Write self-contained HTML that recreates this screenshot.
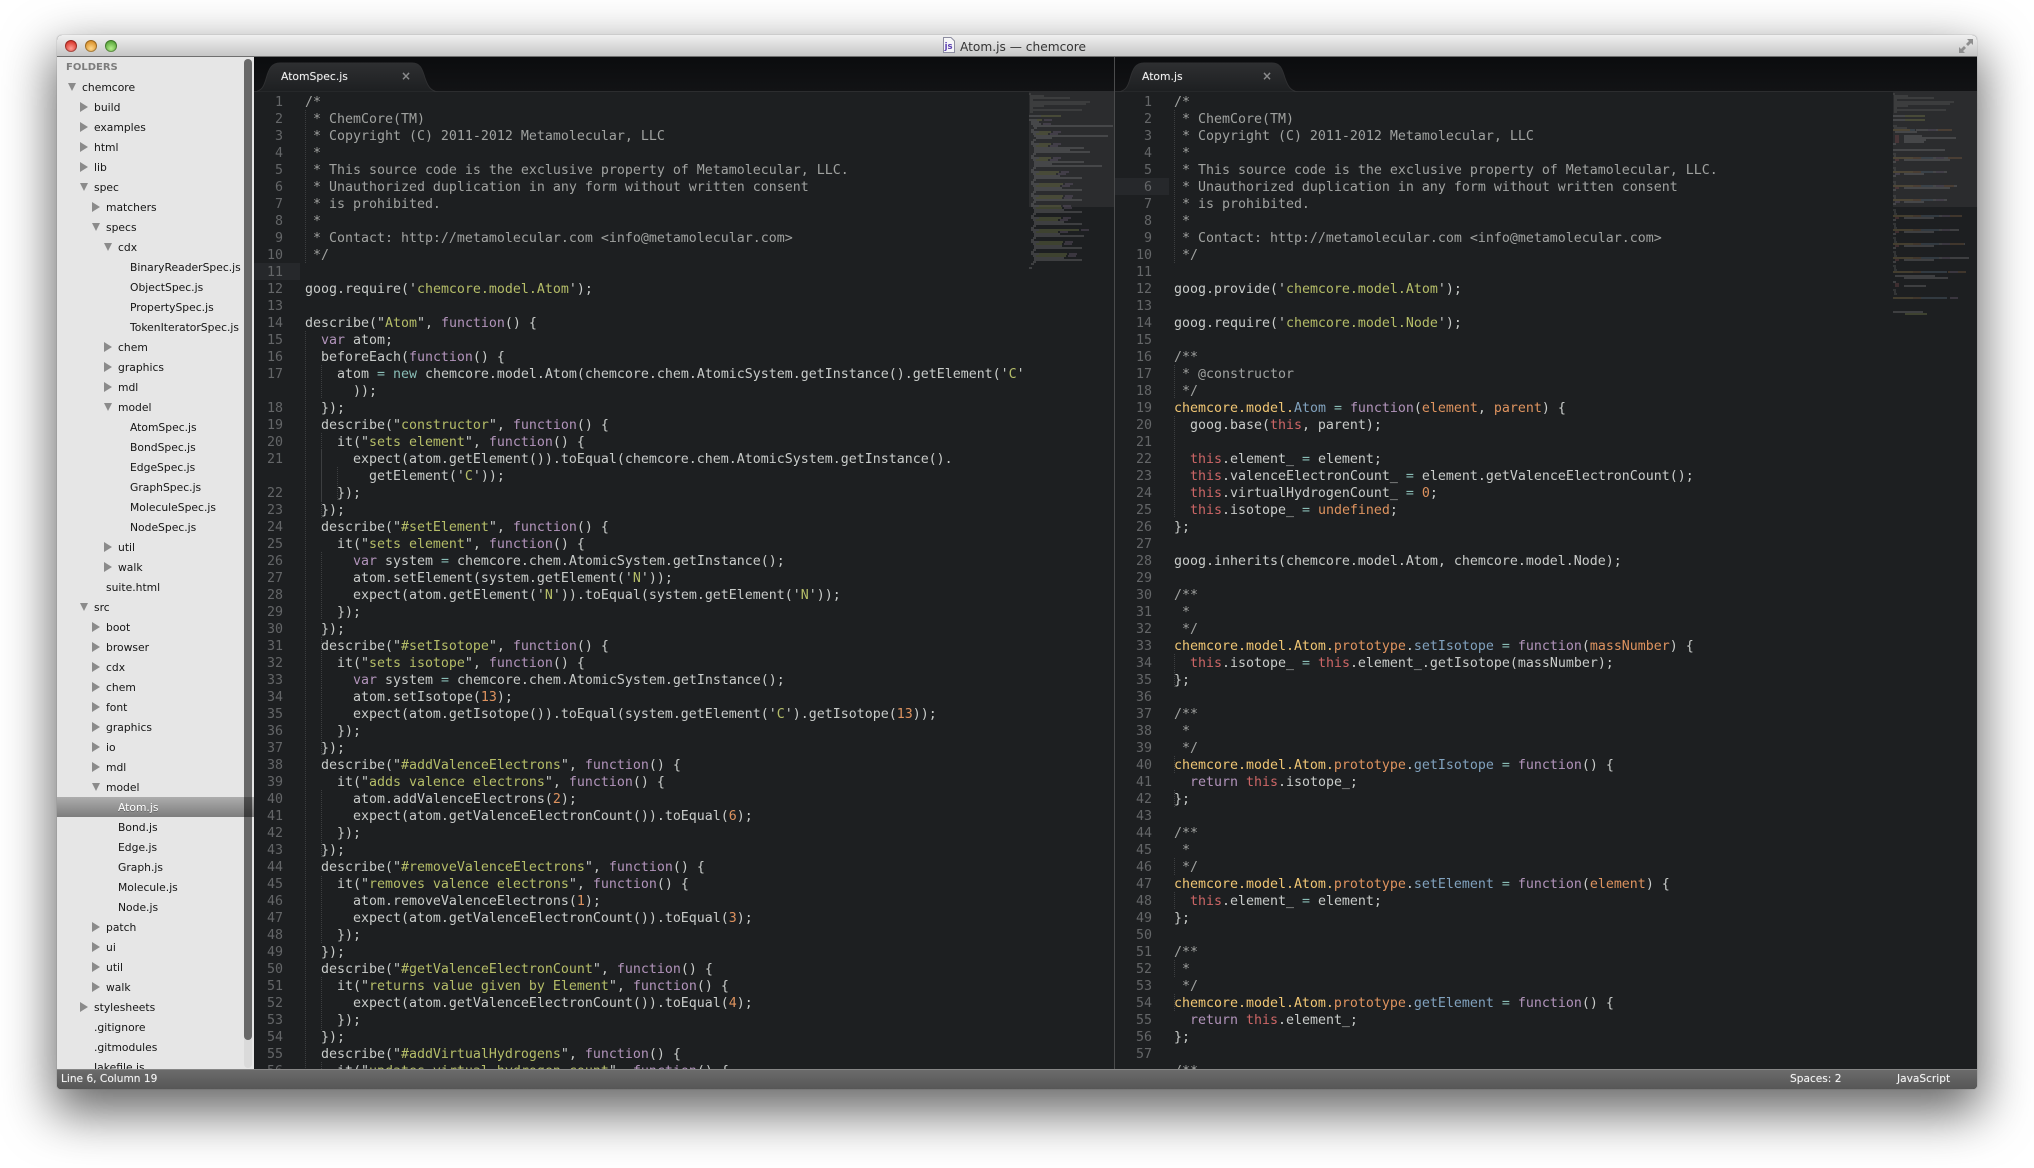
<!DOCTYPE html>
<html><head><meta charset="utf-8"><title>Atom.js — chemcore</title>
<style>
html,body{margin:0;padding:0;width:2034px;height:1168px;overflow:hidden;background:#fff}
div,pre,svg{position:absolute;margin:0}
#win{left:57px;top:35px;width:1920px;height:1054px;border-radius:5px 5px 4px 4px;background:#1d1f21;box-shadow:0 20px 50px 4px rgba(0,0,0,.6),0 0 0 1px rgba(0,0,0,.06)}
#title{left:57px;top:35px;width:1920px;height:22px;border-radius:5px 5px 0 0;background:linear-gradient(#f0f0f0,#c6c6c6);border-bottom:1px solid #6f6f6f;box-sizing:border-box}
.tl{width:12px;height:12px;border-radius:50%;top:40px;box-shadow:inset 0 0 0 1px rgba(0,0,0,.3)}
#ttext{left:960px;top:38px;font:12.2px/18px "DejaVu Sans",sans-serif;color:#343434;white-space:pre}
#tabs{left:254px;top:57px;width:1723px;height:35px;background:linear-gradient(#0b0c0e,#121315);border-bottom:1px solid #2c2d2f;box-sizing:border-box}
#side{left:57px;top:57px;width:197px;height:1012px;box-sizing:border-box;padding-top:1px;background:#e6e6e6;overflow:hidden;font:10.75px/20px "DejaVu Sans",sans-serif;color:#141414;filter:blur(.25px)}
#side p{margin:0;height:20px;white-space:pre;position:relative}
#side .f{padding-left:9px;font-weight:bold;color:#7d7d7d;font-size:10px}
.a{padding-left:25px}.b{padding-left:37px}.c{padding-left:49px}.d{padding-left:61px}.e{padding-left:73px}
.r:before,.o:before{content:"";position:absolute;top:4px;width:0;height:0}
.r:before{border-left:8px solid #8b8b8b;border-top:5px solid transparent;border-bottom:5px solid transparent}
.o:before{top:5px;border-top:8px solid #8b8b8b;border-left:4.5px solid transparent;border-right:4.5px solid transparent}
.a:before{left:11px}.b:before{left:23px}.c:before{left:35px}.d:before{left:47px}
#sel{left:57px;top:797px;width:197px;height:20px;background:linear-gradient(#adadad,#7d7d7d);color:#fff;font:10.75px/20px "DejaVu Sans",sans-serif;white-space:pre;box-sizing:border-box;padding:1px 0 0 61px;text-shadow:0 1px 0 #666;filter:blur(.25px);overflow:hidden}
.ed{overflow:hidden;top:92px;height:977px;background:#1d1f21}
pre{font:13.29px/17px "DejaVu Sans Mono",monospace;color:#c9ccca;top:2px;filter:blur(.25px)}
.n{color:#646668;text-align:right}
.cm{color:#a0a2a0}
s,u,b,em,i,a,tt{text-decoration:none;font:inherit}
s{color:#b5bd68}u{color:#b294bb}b{color:#cc6666}em{color:#de935f}i{color:#81a2be}a{color:#f0c674}tt{color:#8abeb7}
#status{left:57px;top:1069px;width:1920px;height:20px;border-radius:0 0 4px 4px;background:linear-gradient(#6b6b6b,#565656);border-top:1px solid #868686;box-sizing:border-box;color:#f6f6f6;font:10.6px/19px "DejaVu Sans",sans-serif;white-space:pre;text-shadow:0 0 1px rgba(255,255,255,.35)}
#status span{position:absolute;top:0}
.tn{color:#f2f2f2;font:10.8px/18px "DejaVu Sans",sans-serif;top:68px;white-space:pre;text-shadow:0 0 1px rgba(255,255,255,.3)}
.tx{color:#8a8b8c;font:bold 12px/18px "DejaVu Sans",sans-serif;top:67px}
.mm{opacity:.72}
</style></head><body>
<div id="win"></div>
<div id="title"></div>
<div class="tl" style="left:65px;background:radial-gradient(circle at 50% 70%,#ff9d94,#d8352b 70%)"></div>
<div class="tl" style="left:85px;background:radial-gradient(circle at 50% 70%,#ffd78a,#d9902a 70%)"></div>
<div class="tl" style="left:105px;background:radial-gradient(circle at 50% 70%,#b4ee8c,#58a63a 70%)"></div>
<svg style="left:942px;top:37px" width="14" height="16" viewBox="0 0 14 16"><path d="M1.5.5H9L12.5 4V15.5H1.5Z" fill="#f6f6f8" stroke="#8d8da0"/><text x="2.6" y="12" font-family="DejaVu Sans,sans-serif" font-weight="bold" font-size="8.5" fill="#5a3fb0">js</text></svg>
<div id="ttext">Atom.js — chemcore</div>
<svg style="left:1958px;top:38px" width="16" height="16" viewBox="0 0 16 16"><path d="M9 1H15V7L13 5L10 8L8 6L11 3ZM1 15V9L3 11L6 8L8 10L5 13L7 15Z" fill="#8e8e8e"/></svg>

<div id="tabs"></div>
<svg style="left:254px;top:57px" width="1723" height="36" viewBox="254 57 1723 36">
<defs><linearGradient id="g" x1="0" y1="0" x2="0" y2="1"><stop offset="0" stop-color="#2e2f31"/><stop offset="1" stop-color="#1d1f21"/></linearGradient></defs>
<path d="M254 92C262 91 264 86 266 79C269 68 272 63 280 63H412C420 63 422 68 425 78C428 87 431 91 438 92Z" fill="url(#g)" stroke="#2f3032" stroke-width="1"/>
<path d="M1118 92C1126 91 1128 86 1130 79C1133 68 1136 63 1144 63H1272C1280 63 1282 68 1285 78C1288 87 1291 91 1298 92Z" fill="url(#g)" stroke="#2f3032" stroke-width="1"/>
</svg>
<div class="tn" style="left:281px">AtomSpec.js</div>
<div class="tx" style="left:401px">×</div>
<div class="tn" style="left:1142px">Atom.js</div>
<div class="tx" style="left:1262px">×</div>

<div id="side"><p class="f">FOLDERS</p>
<p class="a o">chemcore</p>
<p class="b r">build</p>
<p class="b r">examples</p>
<p class="b r">html</p>
<p class="b r">lib</p>
<p class="b o">spec</p>
<p class="c r">matchers</p>
<p class="c o">specs</p>
<p class="d o">cdx</p>
<p class="e">BinaryReaderSpec.js</p>
<p class="e">ObjectSpec.js</p>
<p class="e">PropertySpec.js</p>
<p class="e">TokenIteratorSpec.js</p>
<p class="d r">chem</p>
<p class="d r">graphics</p>
<p class="d r">mdl</p>
<p class="d o">model</p>
<p class="e">AtomSpec.js</p>
<p class="e">BondSpec.js</p>
<p class="e">EdgeSpec.js</p>
<p class="e">GraphSpec.js</p>
<p class="e">MoleculeSpec.js</p>
<p class="e">NodeSpec.js</p>
<p class="d r">util</p>
<p class="d r">walk</p>
<p class="c">suite.html</p>
<p class="b o">src</p>
<p class="c r">boot</p>
<p class="c r">browser</p>
<p class="c r">cdx</p>
<p class="c r">chem</p>
<p class="c r">font</p>
<p class="c r">graphics</p>
<p class="c r">io</p>
<p class="c r">mdl</p>
<p class="c o">model</p>
<p class="d"></p>
<p class="d">Bond.js</p>
<p class="d">Edge.js</p>
<p class="d">Graph.js</p>
<p class="d">Molecule.js</p>
<p class="d">Node.js</p>
<p class="c r">patch</p>
<p class="c r">ui</p>
<p class="c r">util</p>
<p class="c r">walk</p>
<p class="b r">stylesheets</p>
<p class="b">.gitignore</p>
<p class="b">.gitmodules</p>
<p class="b">Jakefile.js</p>
</div>
<div id="sel">Atom.js</div>
<div style="left:244px;top:59px;width:8px;height:1009px;border-radius:4px;background:rgba(0,0,0,.05)"></div>
<div style="left:244px;top:59px;width:8px;height:981px;border-radius:4px;background:rgba(0,0,0,.52)"></div>

<div class="ed" style="left:254px;width:860px">
<div style="left:0;top:171px;width:46px;height:17px;background:#26282b"></div>
<pre class="n" style="left:0;width:29px">1
2
3
4
5
6
7
8
9
10
11
12
13
14
15
16
17

18
19
20
21

22
23
24
25
26
27
28
29
30
31
32
33
34
35
36
37
38
39
40
41
42
43
44
45
46
47
48
49
50
51
52
53
54
55
56</pre>
<svg style="left:0;top:0" width="860" height="977" viewBox="254 92 860 977"><g stroke="#3c3e40" stroke-dasharray="1 1" fill="none"><path d="M305.5 110V263M305.5 331V1069M321.5 365V399M321.5 433V518M321.5 637V688M321.5 790V858M321.5 876V943M321.5 977V1030M321.5 1062V1069M321.5 450V501M321.5 552V620M321.5 688V756M337.5 467V501"/></g></svg>
<pre style="left:51px"><span class="cm">/*
 * ChemCore(TM)
 * Copyright (C) 2011-2012 Metamolecular, LLC
 *
 * This source code is the exclusive property of Metamolecular, LLC.
 * Unauthorized duplication in any form without written consent
 * is prohibited.
 *
 * Contact: http://metamolecular.com &lt;info@metamolecular.com&gt;
 */</span>

goog.require('<s>chemcore.model.Atom</s>');

describe("<s>Atom</s>", <u>function</u>() {
  <u>var</u> atom;
  beforeEach(<u>function</u>() {
    atom <tt>=</tt> <tt>new</tt> chemcore.model.Atom(chemcore.chem.AtomicSystem.getInstance().getElement('<s>C</s>'
      ));
  });
  describe("<s>constructor</s>", <u>function</u>() {
    it("<s>sets element</s>", <u>function</u>() {
      expect(atom.getElement()).toEqual(chemcore.chem.AtomicSystem.getInstance().
        getElement('<s>C</s>'));
    });
  });
  describe("<s>#setElement</s>", <u>function</u>() {
    it("<s>sets element</s>", <u>function</u>() {
      <u>var</u> system <tt>=</tt> chemcore.chem.AtomicSystem.getInstance();
      atom.setElement(system.getElement('<s>N</s>'));
      expect(atom.getElement('<s>N</s>')).toEqual(system.getElement('<s>N</s>'));
    });
  });
  describe("<s>#setIsotope</s>", <u>function</u>() {
    it("<s>sets isotope</s>", <u>function</u>() {
      <u>var</u> system <tt>=</tt> chemcore.chem.AtomicSystem.getInstance();
      atom.setIsotope(<em>13</em>);
      expect(atom.getIsotope()).toEqual(system.getElement('<s>C</s>').getIsotope(<em>13</em>));
    });
  });
  describe("<s>#addValenceElectrons</s>", <u>function</u>() {
    it("<s>adds valence electrons</s>", <u>function</u>() {
      atom.addValenceElectrons(<em>2</em>);
      expect(atom.getValenceElectronCount()).toEqual(<em>6</em>);
    });
  });
  describe("<s>#removeValenceElectrons</s>", <u>function</u>() {
    it("<s>removes valence electrons</s>", <u>function</u>() {
      atom.removeValenceElectrons(<em>1</em>);
      expect(atom.getValenceElectronCount()).toEqual(<em>3</em>);
    });
  });
  describe("<s>#getValenceElectronCount</s>", <u>function</u>() {
    it("<s>returns value given by Element</s>", <u>function</u>() {
      expect(atom.getValenceElectronCount()).toEqual(<em>4</em>);
    });
  });
  describe("<s>#addVirtualHydrogens</s>", <u>function</u>() {
    it("<s>updates virtual hydrogen count</s>", <u>function</u>() {</pre>
<div style="left:775px;top:0;width:85px;height:115px;background:#2b2c2e"></div>
<svg class="mm" style="left:775px;top:0" width="85" height="200" viewBox="1029 92 85 200" stroke-width="1" fill="none">
<path stroke="#5b5c5d" d="M1029 94h2M1030 96h14M1030 98h40M1030 100h3M1030 102h60M1030 104h56M1030 106h14M1030 108h3M1030 110h52M1030 112h3"/>
<path stroke="#77787a" d="M1029 116h12M1029 120h8M1031 122h8M1031 124h10M1033 126h80M1034 128h3M1031 130h3M1031 132h8M1033 134h3M1034 136h74M1036 138h16M1033 140h3M1031 142h3M1031 144h8M1033 146h3M1034 148h50M1034 150h36M1034 152h56M1033 154h3M1031 156h3M1031 158h8M1033 160h3M1034 162h50M1034 164h18M1034 166h68M1033 168h3M1031 170h3M1031 172h8M1033 174h3M1034 176h26M1034 178h48M1033 180h3M1031 182h3M1031 184h8M1033 186h3M1034 188h28M1034 190h48M1033 192h3M1031 194h3M1031 196h8M1033 198h3M1034 200h48M1033 202h3M1031 204h3M1031 206h8M1033 208h3M1034 210h30M1034 212h48M1033 214h3M1031 216h3M1031 218h8M1033 220h3M1034 222h30M1034 224h48M1033 226h3M1031 228h3M1031 230h8M1033 232h3M1034 234h26M1034 236h50M1033 238h3M1031 240h3M1031 242h8M1033 244h3M1034 246h28M1034 248h48M1033 250h3M1031 252h3M1031 254h8M1033 256h3M1034 258h30M1034 260h48M1033 262h3M1031 264h3M1029 268h3"/>
<path stroke="#7b7f4c" d="M1041 116h20M1037 120h5M1039 132h12M1036 134h12M1039 144h12M1036 146h12M1039 158h12M1036 160h12M1039 172h20M1036 174h20M1039 184h24M1036 186h24M1039 196h24M1036 198h26M1039 206h22M1036 208h26M1039 218h22M1036 220h22M1039 230h40M1036 232h22M1039 242h24M1036 244h26M1039 254h28M1036 256h30"/>
<path stroke="#6d6075" d="M1044 120h8M1043 124h8M1053 132h8M1050 134h8M1053 144h8M1050 146h8M1053 158h8M1050 160h8M1061 172h8M1058 174h8M1065 184h8M1062 186h8M1065 196h8M1064 198h8M1063 206h8M1064 208h8M1063 218h8M1060 220h8M1081 230h8M1060 232h8M1065 242h8M1064 244h8M1069 254h8M1068 256h8"/>
</svg>
</div>

<div style="left:1114px;top:57px;width:1px;height:1012px;background:#4b4c4d"></div>

<div class="ed" style="left:1115px;width:862px">
<div style="left:0;top:86px;width:54px;height:17px;background:#26282b"></div>
<pre class="n" style="left:0;width:37px">1
2
3
4
5
6
7
8
9
10
11
12
13
14
15
16
17
18
19
20
21
22
23
24
25
26
27
28
29
30
31
32
33
34
35
36
37
38
39
40
41
42
43
44
45
46
47
48
49
50
51
52
53
54
55
56
57
</pre>
<svg style="left:0;top:0" width="862" height="977" viewBox="1115 92 862 977"><path stroke="#3c3e40" stroke-dasharray="1 1" fill="none" d="M1174.5 110V263M1174.5 365V399M1174.5 416V518M1174.5 654V688M1174.5 756V773M1174.5 790V807M1174.5 858V875M1174.5 892V909M1174.5 960V977M1174.5 994V1011"/></svg>
<pre style="left:59px"><span class="cm">/*
 * ChemCore(TM)
 * Copyright (C) 2011-2012 Metamolecular, LLC
 *
 * This source code is the exclusive property of Metamolecular, LLC.
 * Unauthorized duplication in any form without written consent
 * is prohibited.
 *
 * Contact: http://metamolecular.com &lt;info@metamolecular.com&gt;
 */</span>

goog.provide('<s>chemcore.model.Atom</s>');

goog.require('<s>chemcore.model.Node</s>');

<span class="cm">/**
 * @constructor
 */</span>
<a>chemcore.model.</a><i>Atom</i> <tt>=</tt> <u>function</u>(<em>element</em>, <em>parent</em>) {
  goog.base(<b>this</b>, parent);

  <b>this</b>.element_ <tt>=</tt> element;
  <b>this</b>.valenceElectronCount_ <tt>=</tt> element.getValenceElectronCount();
  <b>this</b>.virtualHydrogenCount_ <tt>=</tt> <em>0</em>;
  <b>this</b>.isotope_ <tt>=</tt> <em>undefined</em>;
};

goog.inherits(chemcore.model.Atom, chemcore.model.Node);

<span class="cm">/**
 *
 */</span>
<a>chemcore.model.Atom.</a><em>prototype</em>.<i>setIsotope</i> <tt>=</tt> <u>function</u>(<em>massNumber</em>) {
  <b>this</b>.isotope_ <tt>=</tt> <b>this</b>.element_.getIsotope(massNumber);
};

<span class="cm">/**
 *
 */</span>
<a>chemcore.model.Atom.</a><em>prototype</em>.<i>getIsotope</i> <tt>=</tt> <u>function</u>() {
  <u>return</u> <b>this</b>.isotope_;
};

<span class="cm">/**
 *
 */</span>
<a>chemcore.model.Atom.</a><em>prototype</em>.<i>setElement</i> <tt>=</tt> <u>function</u>(<em>element</em>) {
  <b>this</b>.element_ <tt>=</tt> element;
};

<span class="cm">/**
 *
 */</span>
<a>chemcore.model.Atom.</a><em>prototype</em>.<i>getElement</i> <tt>=</tt> <u>function</u>() {
  <u>return</u> <b>this</b>.element_;
};

<span class="cm">/**</span></pre>
<div style="left:778px;top:0;width:84px;height:115px;background:#2b2c2e"></div>
<svg class="mm" style="left:778px;top:0" width="84" height="240" viewBox="1893 92 84 240" stroke-width="1" fill="none">
<path stroke="#5b5c5d" d="M1893 94h2M1894 96h14M1894 98h40M1894 100h3M1894 102h60M1894 104h56M1894 106h14M1894 108h3M1894 110h52M1894 112h3M1893 126h4M1894 128h13M1894 130h3M1893 154h3M1894 156h2M1894 158h3M1893 168h3M1894 170h2M1894 172h3M1893 182h3M1894 184h2M1894 186h3M1893 196h3M1894 198h2M1894 200h3M1893 210h3M1894 212h2M1894 214h3M1893 224h3M1894 226h2M1894 228h3M1893 238h3M1894 240h2M1894 242h3M1893 252h3M1894 254h2M1894 256h3M1893 266h3M1894 268h2M1894 270h3M1893 290h3M1894 292h2M1894 294h3"/>
<path stroke="#77787a" d="M1893 116h12M1893 120h12M1916 130h22M1895 132h22M1904 136h18M1904 138h52M1904 140h22M1904 142h20M1893 144h3M1893 150h52M1931 158h26M1904 160h46M1893 162h3M1925 172h22M1904 174h20M1893 176h3M1931 186h26M1904 188h46M1893 190h3M1925 200h22M1904 202h20M1893 204h3M1939 216h20M1904 218h30M1893 220h3M1939 230h20M1904 232h30M1893 234h3M1939 244h26M1904 246h30M1893 248h3M1939 258h30M1904 260h30M1893 262h3M1895 276h40M1904 278h44M1893 282h3M1904 286h22M1893 312h30"/>
<path stroke="#7b7f4c" d="M1905 116h20M1905 120h20M1905 314h22"/>
<path stroke="#8a7648" d="M1893 130h17M1893 158h20M1893 172h20M1893 186h20M1893 200h20M1893 216h20M1893 230h20M1893 244h20M1893 258h20M1893 272h20M1893 298h20"/>
<path stroke="#80603f" d="M1913 158h8M1913 172h8M1913 186h8M1913 200h8M1913 216h8M1913 230h8M1913 244h8M1913 258h8M1913 272h8M1913 298h8M1938 130h14M1948 158h14M1942 186h12M1948 216h14M1946 244h18M1948 272h18"/>
<path stroke="#56697a" d="M1910 130h5M1921 158h12M1921 172h12M1921 186h12M1921 200h12M1921 216h18M1921 230h18M1921 244h18M1921 258h18M1921 272h26M1921 298h26"/>
<path stroke="#6d6075" d="M1928 130h8M1936 158h8M1936 172h8M1936 186h8M1936 200h8M1942 216h8M1942 230h8M1942 244h8M1942 258h8M1950 272h8M1950 298h8M1895 174h5M1895 202h5"/>
<path stroke="#7b4a4a" d="M1895 136h4M1895 138h4M1895 140h4M1895 142h4M1895 160h4M1895 188h4M1895 218h4M1895 232h4M1895 246h4M1895 260h4M1895 284h4M1895 286h4"/>
</svg>
</div>

<div id="status"><span style="left:4px">Line 6, Column 19</span><span style="left:1733px">Spaces: 2</span><span style="left:1840px">JavaScript</span></div>
</body></html>
